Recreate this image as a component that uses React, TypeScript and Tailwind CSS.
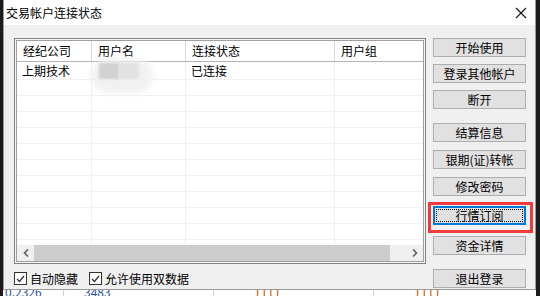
import React from "react";

const cols = [
  { title: "经纪公司", w: "w-[75px]" },
  { title: "用户名", w: "w-[94px]" },
  { title: "连接状态", w: "w-[149px]" },
  { title: "用户组", w: "w-[120px]" },
];

const rows = [
  ["上期技术", "", "已连接", ""],
  ...Array.from({ length: 11 }, () => ["", "", "", ""]),
];

const Btn = ({ label, className = "", focused = false }: { label: string; className?: string; focused?: boolean }) =>
  focused ? (
    <div className={`h-[19px] w-[93px] border-2 border-[#0078d7] bg-[#e1e1e1] p-px ${className}`}>
      <div className="w-full h-full border border-dotted border-black flex items-center justify-center text-[12px] leading-none text-black">
        {label}
      </div>
    </div>
  ) : (
    <div
      className={`h-[19px] w-[93px] border border-[#adadad] bg-[#e1e1e1] flex items-center justify-center text-[12px] leading-none text-black ${className}`}
    >
      {label}
    </div>
  );

const Check = ({ label }: { label: string }) => (
  <div className="flex items-center gap-[3px]">
    <div className="w-[13px] h-[13px] border border-[#333333] bg-white flex items-center justify-center">
      <svg width="9" height="8" viewBox="0 0 9 8">
        <polyline points="1,4 3.5,6.5 8,1" fill="none" stroke="#333" strokeWidth="1.2" />
      </svg>
    </div>
    <span className="text-[12px] leading-none text-black">{label}</span>
  </div>
);

export default function App() {
  return (
    <div
      className="relative w-[540px] h-[296px] bg-white overflow-hidden flex"
      style={{ fontFamily: '"Noto Sans CJK SC", "Liberation Sans", sans-serif' }}
    >
      <div className="w-[3px] h-full bg-[#1c1c1c]" />

      <div className="flex flex-col">
        {/* dialog */}
        <div className="w-[533px] h-[290px] flex flex-col bg-[#f0f0f0] border-x border-b border-[#9a9a9a]">
          <div className="h-[25px] bg-white flex items-center justify-between pl-[2px] pr-[8px]">
            <span className="text-[12px] leading-none text-black">交易帐户连接状态</span>
            <svg width="12" height="12" viewBox="0 0 12 12">
              <path d="M1 1 L11 11 M11 1 L1 11" stroke="#111" strokeWidth="1.1" />
            </svg>
          </div>

          <div className="flex-1 flex pl-[10px] pt-[13px]">
            <div className="flex flex-col">
              {/* list view */}
              <div className="relative w-[412px] h-[226px] border border-[#828282] bg-[#f4f4f4] p-px">
                <div className="w-full h-full border border-[#a0a0a0] bg-white flex flex-col overflow-hidden">
                  <div className="flex-1 overflow-hidden">
                    <div className="flex h-[21px] border-b border-[#b4b4b4]">
                      {cols.map((c) => (
                        <div
                          key={c.title}
                          className={`${c.w} shrink-0 border-r border-[#d6d6d6] flex items-center pl-[6px] text-[12px] leading-none text-black`}
                        >
                          {c.title}
                        </div>
                      ))}
                    </div>
                    {rows.map((r, i) => (
                      <div key={i} className={`flex ${i === 0 ? "h-[18px]" : "h-[16px]"} border-b border-[#f0f0f0]`}>
                        {r.map((cell, j) => (
                          <div
                            key={j}
                            className={`${cols[j].w} shrink-0 border-r border-[#f0f0f0] flex items-center pl-[5px] text-[12px] leading-none text-black`}
                          >
                            {cell}
                          </div>
                        ))}
                      </div>
                    ))}
                  </div>
                  {/* horizontal scrollbar */}
                  <div className="h-[16px] flex items-center bg-[#f0f0f0]">
                    <div className="w-[17px] flex justify-center">
                      <svg width="6" height="8" viewBox="0 0 6 8">
                        <polyline points="5,0.5 1.5,4 5,7.5" fill="none" stroke="#606060" strokeWidth="1.6" />
                      </svg>
                    </div>
                    <div className="w-[356px] h-full bg-[#cdcdcd]" />
                    <div className="flex-1" />
                    <div className="w-[17px] flex justify-center">
                      <svg width="6" height="8" viewBox="0 0 6 8">
                        <polyline points="1,0.5 4.5,4 1,7.5" fill="none" stroke="#606060" strokeWidth="1.6" />
                      </svg>
                    </div>
                  </div>
                </div>
                {/* blurred user name */}
                <div className="absolute left-[76px] top-[20px] w-[62px] h-[34px] rounded-full bg-[#f1f1f1] blur-[3px]" />
                <div className="absolute left-[84px] top-[24px] w-[20px] h-[16px] bg-[#d2d2d2] blur-[1px]" />
                <div className="absolute left-[104px] top-[24px] w-[20px] h-[16px] bg-[#e2e2e2] blur-[1px]" />
              </div>

              <div className="flex items-center gap-[11px] mt-[8px]">
                <Check label="自动隐藏" />
                <Check label="允许使用双数据" />
              </div>
            </div>

            <div className="flex flex-col ml-[7px]">
              <Btn label="开始使用" />
              <Btn label="登录其他帐户" className="mt-[7px]" />
              <Btn label="断开" className="mt-[7px]" />
              <Btn label="结算信息" className="mt-[14px]" />
              <Btn label="银期(证)转帐" className="mt-[8px]" />
              <Btn label="修改密码" className="mt-[8px]" />
              <Btn label="行情订阅" className="mt-[10px]" focused />
              <Btn label="资金详情" className="mt-[11px]" />
              <Btn label="退出登录" className="mt-[14px]" />
            </div>
          </div>
        </div>

        {/* window behind, peeking out below */}
        <div className="h-[6px] flex overflow-hidden text-[12px] leading-[12px] text-[#2a4f9a]">
          <span className="w-[60px] -mt-[4px] pl-[2px]">0.2326</span>
          <span className="w-[150px] -mt-[4px] border-l border-[#d0d0d0] pl-[20px]">3483</span>
          <span className="w-[160px] -mt-[4px] border-l border-[#d0d0d0] pl-[40px] text-[#c06010]">1111</span>
          <span className="flex-1 -mt-[4px] border-l border-[#d0d0d0] pl-[40px] text-[#c06010]">1111</span>
        </div>
      </div>

      <div className="w-[4px] h-full bg-[#1c1c1c]" />

      {/* highlight annotation */}
      <div className="absolute left-[428px] top-[202px] w-[105px] h-[31px] border-[3px] border-[#ef3b3b]" />
    </div>
  );
}
